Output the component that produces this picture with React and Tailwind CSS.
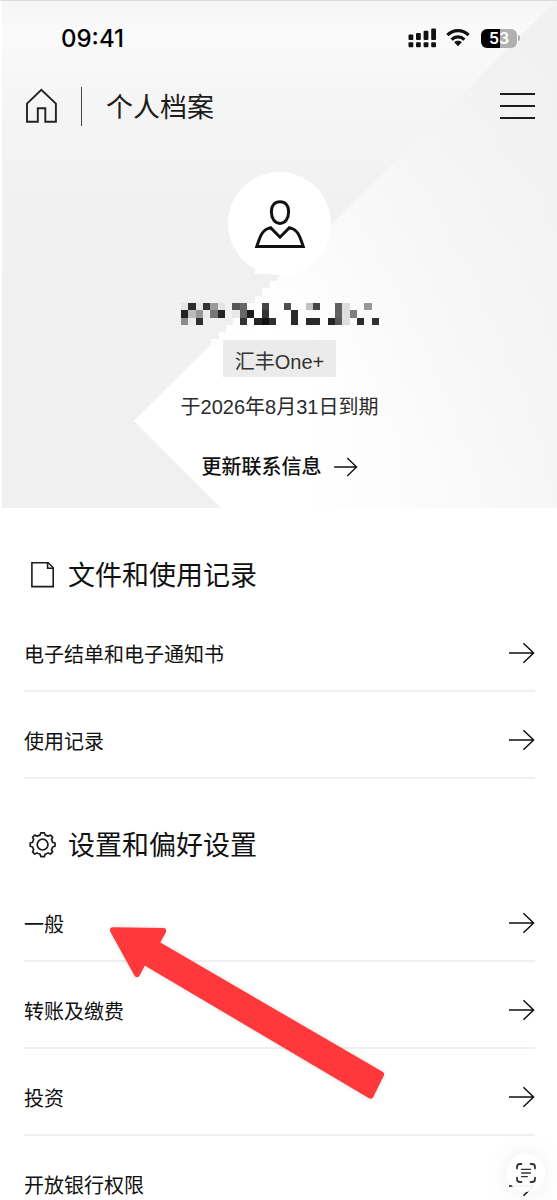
import React from "react";

const CELL = 22 / 3;

// [column, row, colour] of the blocks that hide the account name
const NAME_BLOCKS = [
  [0, 0, "#e4e4e4"], [1, 0, "#2c2c2c"], [2, 0, "#e9e9e9"], [3, 0, "#343434"], [4, 0, "#999"], [5, 0, "#e4e4e4"],
  [7, 0, "#555"], [8, 0, "#686868"], [11, 0, "#444"], [14, 0, "#505050"], [17, 0, "#c2c2c2"], [18, 0, "#444"],
  [21, 0, "#606060"], [22, 0, "#dedede"], [25, 0, "#999"],
  [0, 1, "#222"], [1, 1, "#bbb"], [2, 1, "#979797"], [3, 1, "#eaeaea"], [4, 1, "#777"], [5, 1, "#242424"],
  [7, 1, "#e8e8e8"], [8, 1, "#666"], [9, 1, "#1c1c1c"], [11, 1, "#333"], [15, 1, "#2b2b2b"],
  [21, 1, "#606060"], [22, 1, "#dedede"], [23, 1, "#808080"],
  [0, 2, "#8c8c8c"], [1, 2, "#ececec"], [2, 2, "#2f2f2f"], [8, 2, "#333"], [10, 2, "#242424"], [11, 2, "#101010"],
  [12, 2, "#303030"], [15, 2, "#2b2b2b"], [17, 2, "#2a2a2a"], [18, 2, "#2a2a2a"], [20, 2, "#242424"],
  [21, 2, "#585858"], [22, 2, "#dedede"], [24, 2, "#2b2b2b"], [26, 2, "#303030"],
];

function HeroBackground() {
  return (
    <svg
      className="absolute inset-0 h-full w-full"
      viewBox="0 0 557 508"
      preserveAspectRatio="none"
      aria-hidden="true"
    >
      <defs>
        <linearGradient id="base" x1="0" y1="0" x2="0" y2="1">
          <stop offset="0" stopColor="#f5f5f5" />
          <stop offset="0.06" stopColor="#fafafa" />
          <stop offset="0.2" stopColor="#f5f5f5" />
          <stop offset="0.4" stopColor="#f1f1f1" />
          <stop offset="1" stopColor="#f0f0f0" />
        </linearGradient>
        <linearGradient id="facet" gradientUnits="userSpaceOnUse" x1="557" y1="40" x2="300" y2="360">
          <stop offset="0" stopColor="#f0f0f0" />
          <stop offset="0.5" stopColor="#f8f8f8" />
          <stop offset="1" stopColor="#fff" />
        </linearGradient>
        <linearGradient id="edge" x1="0" y1="0" x2="1" y2="0">
          <stop offset="0.4" stopColor="#f1f1f1" stopOpacity="0" />
          <stop offset="1" stopColor="#f1f1f1" stopOpacity="0.6" />
        </linearGradient>
      </defs>
      <rect width="557" height="508" fill="url(#base)" />
      <path d="M557 0 134 421 221 508H557Z" fill="url(#facet)" />
      <path d="M557 0 134 421 221 508H557Z" fill="url(#edge)" />
      <path d="M255 266H300V274H255Z" fill="#fff" />
      <path d="M255 274H277V281H270V288H262V296H255V303H247V318H240V330H226V345H200Z" fill="#f0f0f0" />
      <path d="M277 281H270V288H262V296H255V303H247V310H240V318H233V325H226V332H219V339H211V346H226V340H255V303L277 290Z" fill="#fefefe" />
      <path d="M0 0H2V508H0Z" fill="#fff" />
      <path d="M0 0H557V1H0Z" fill="#dcdcdc" />
    </svg>
  );
}

function ArrowRight({ className }) {
  return (
    <svg className={className} viewBox="0 0 26 22" fill="none" stroke="#111" strokeWidth="1.5" aria-hidden="true">
      <path d="M0 11H24.6M14.4 1.2 24.6 11 14.4 20.8" />
    </svg>
  );
}

function StatusBar() {
  return (
    <div className="flex h-[76px] items-center justify-between pr-[37px] pl-[61px]">
      <span className="pt-0.5 font-['Inter',sans-serif] text-2xl font-medium text-black">09:41</span>
      <div className="flex items-center gap-2">
        <svg className="h-5 w-[30px]" viewBox="0 0 30 20" fill="#111" aria-label="信号">
          <rect x="0.5" y="6.6" width="4.8" height="5.4" rx="1" />
          <rect x="8" y="5" width="4.8" height="7" rx="1" />
          <rect x="15.6" y="2.8" width="4.8" height="9.2" rx="1" />
          <rect x="23.2" y="0.6" width="4.8" height="11.4" rx="1" />
          <rect x="0.5" y="14.2" width="4.8" height="5" rx="1" />
          <rect x="8" y="14.2" width="4.8" height="5" rx="1" />
          <rect x="15.6" y="14.2" width="4.8" height="5" rx="1" />
          <rect x="23.2" y="14.2" width="4.8" height="5" rx="1" />
        </svg>
        <svg className="h-5 w-6" viewBox="0 0 24 20" fill="none" stroke="#111" strokeWidth="3.3" aria-label="无线网络">
          <path d="M1.4 7.2C7.5 1.1 16.5 1.1 22.6 7.2" />
          <path d="M5.6 11.6C9.3 8 14.7 8 18.4 11.6" />
          <path d="M8.2 14.2C10.4 12.3 13.6 12.3 15.8 14.2L12 18.2Z" fill="#111" stroke="none" />
        </svg>
        <div className="flex items-center gap-px pl-[3px]">
          <div className="flex h-[19px] w-9 items-center justify-center rounded-md bg-linear-to-r from-black from-53% to-[#b0b0b0] to-53%">
            <span className="font-['Inter',sans-serif] text-base leading-none font-semibold text-white">53</span>
          </div>
          <span className="h-1.5 w-0.5 rounded-r-full bg-[#b0b0b0]" />
        </div>
      </div>
    </div>
  );
}

function NavBar() {
  return (
    <nav className="flex h-15 items-center pr-[22px] pl-[25px]">
      <button type="button" aria-label="主页">
        <svg className="h-9 w-8" viewBox="0 0 32 36" fill="none" stroke="#222" strokeWidth="1.9" aria-hidden="true">
          <path d="M2 15.6 16.3 1.8 30.9 15.6V33.8H20.3V20.3H12.8V33.8H2Z" />
        </svg>
      </button>
      <span className="ml-6 h-[39px] w-px bg-[#444]" />
      <h1 className="ml-6 pt-[3px] text-[27px] leading-10 text-[#1c1c1c]">个人档案</h1>
      <button type="button" aria-label="菜单" className="ml-auto flex flex-col gap-2.5">
        <span className="h-0.5 w-[35px] bg-[#1c1c1c]" />
        <span className="h-0.5 w-[35px] bg-[#1c1c1c]" />
        <span className="h-0.5 w-[35px] bg-[#1c1c1c]" />
      </button>
    </nav>
  );
}

function Profile() {
  return (
    <div className="flex flex-col items-center pt-9 pb-[27px] pl-0.5 text-xl leading-7">
      <div className="flex size-[103px] items-center justify-center rounded-full bg-white">
        <svg className="h-12 w-[52px]" viewBox="0 0 52 48" fill="none" stroke="#111" strokeWidth="3" aria-hidden="true">
          <path d="M26 1.8C31.4 1.8 34.6 5.4 34.6 11.8C34.6 18.8 31.2 23.4 26 23.4C20.8 23.4 17.4 18.8 17.4 11.8C17.4 5.4 20.6 1.8 26 1.8Z" />
          <path d="M2.8 46.4H49.2C45.8 36.6 44.4 29.8 35.4 27.6L26 37.2L16.6 27.6C7.6 29.8 6.2 36.6 2.8 46.4Z" />
        </svg>
      </div>
      <svg className="mt-7 h-[22px] w-[198px]" viewBox="0 0 198 22" shapeRendering="crispEdges" role="img" aria-label="姓名已隐藏">
        {NAME_BLOCKS.map(([col, row, fill]) => (
          <rect key={`${col}-${row}`} x={col * CELL} y={row * CELL} width={CELL} height={CELL} fill={fill} />
        ))}
      </svg>
      <p className="mt-[15px] flex h-[37px] items-center bg-[#ebebeb] px-3 pt-1.5 text-[#333]">汇丰One+</p>
      <p className="mt-4 text-[#2b2b2b]">于2026年8月31日到期</p>
      <a href="#contact" className="mt-8 flex items-center gap-3 font-medium text-[#111]">
        更新联系信息
        <ArrowRight className="h-5 w-6" />
      </a>
    </div>
  );
}

function Row({ children, last }) {
  return (
    <li className={last ? "" : "border-b-2 border-[#f0f0f0]"}>
      <a
        href="#detail"
        className={
          last
            ? "flex items-start justify-between pt-[38px] text-xl leading-6 text-[#111]"
            : "flex items-start justify-between pt-9 pb-[21px] text-xl leading-7 text-[#111]"
        }
      >
        {children}
        <ArrowRight className="mt-px h-[22px] w-[26px]" />
      </a>
    </li>
  );
}

function Section({ icon, title, children }) {
  return (
    <section className="pt-[47px] pr-[22px] pl-6">
      <h2 className="mb-[9px] flex items-center gap-3 pl-1 text-[27px] leading-10 text-[#111]">
        {icon}
        {title}
      </h2>
      <ul>{children}</ul>
    </section>
  );
}

const fileIcon = (
  <svg className="size-7" viewBox="0 0 28 28" fill="none" stroke="#1c1c1c" strokeWidth="1.6" aria-hidden="true">
    <path d="M3.9 0.8H20.2L25.2 5.8V24.6H3.9Z" />
    <path d="M19.6 0.8V6.3H25.2" />
  </svg>
);

const gearIcon = (
  <svg className="size-7" viewBox="0 0 28 28" fill="none" stroke="#1c1c1c" strokeWidth="1.7" strokeLinejoin="round" aria-hidden="true">
    <g transform="translate(0 -1)">
      <circle cx="14.6" cy="13.6" r="5.4" />
      <path d="M12.9 1.8H16.3L17.2 4.1C18.4 4.4 19 4.6 20.1 5.3L22.5 4.1L24.6 6.3L23.5 8.6C24.1 9.6 24.4 10.3 24.6 11.2L27 12V15.2L24.6 16C24.4 17 24.1 17.6 23.5 18.6L24.6 20.9L22.5 23.1L20.1 21.9C19 22.6 18.4 22.8 17.2 23.1L16.3 25.6H12.9L12 23.1C10.8 22.8 10.2 22.6 9.1 21.9L6.7 23.1L4.6 20.9L5.7 18.6C5.1 17.6 4.8 17 4.6 16L2.2 15.2V12L4.6 11.2C4.8 10.3 5.1 9.6 5.7 8.6L4.6 6.3L6.7 4.1L9.1 5.3C10.2 4.6 10.8 4.4 12 4.1Z" />
    </g>
  </svg>
);

export default function App() {
  return (
    <div className="relative bg-white font-['Liberation_Sans','Noto_Sans_CJK_SC',sans-serif]">
      <header className="relative">
        <HeroBackground />
        <div className="relative">
          <StatusBar />
          <NavBar />
          <Profile />
        </div>
      </header>

      <main className="pt-px">
        <Section icon={fileIcon} title="文件和使用记录">
          <Row>电子结单和电子通知书</Row>
          <Row>使用记录</Row>
        </Section>
        <div className="relative">
          <Section icon={gearIcon} title="设置和偏好设置">
            <Row>一般</Row>
            <Row>转账及缴费</Row>
            <Row>投资</Row>
            <Row last>开放银行权限</Row>
          </Section>
          <svg
            className="pointer-events-none absolute top-[145px] left-[106px] h-[180px] w-[284px] drop-shadow-[0_0_2px_rgba(0,0,0,0.15)]"
            viewBox="0 0 284 180"
            fill="#ff383c"
            stroke="#ff383c"
            strokeWidth="6"
            strokeLinejoin="round"
            aria-hidden="true"
          >
            <path d="M7 6.2 57.2 7 50.2 19.6 275 150.4 264.6 171.6 37.6 37.4 31 50Z" />
          </svg>
        </div>
      </main>

      <button
        type="button"
        aria-label="扫描文字"
        className="fixed right-3 bottom-2 flex size-[38px] items-center justify-center rounded-full bg-white/95 shadow-[0_0_28px_rgba(0,0,0,0.08)]"
      >
        <svg className="size-5" viewBox="0 0 20 20" fill="none" stroke="#333" strokeWidth="1.8" strokeLinecap="round" aria-hidden="true">
          <path d="M1 5.4V4C1 2 2 1 4 1H5.4M14.6 1H16C18 1 19 2 19 4V5.4M19 14.6V16C19 18 18 19 16 19H14.6M5.4 19H4C2 19 1 18 1 16V14.6" />
          <path d="M5.6 6.4H14.4M5.6 10H14.4M5.6 13.6H11.4" strokeWidth="1.4" />
        </svg>
      </button>
    </div>
  );
}
